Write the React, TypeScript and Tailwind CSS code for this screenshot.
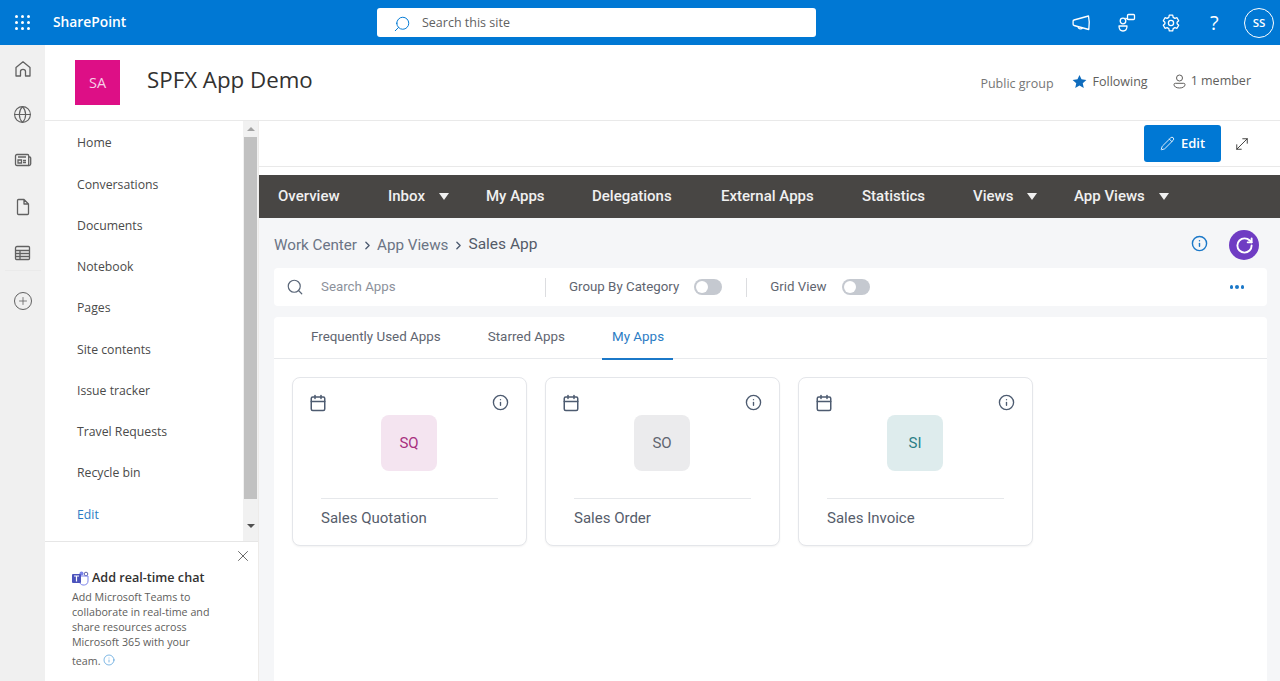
import { Calendar, ChevronRight, Globe, Info, MoveDiagonal, Pencil, Plus, RotateCw, Search, X } from 'lucide-react'

const segoe = "font-['Open_Sans',sans-serif]"

const siteLinks = [
  'Home',
  'Conversations',
  'Documents',
  'Notebook',
  'Pages',
  'Site contents',
  'Issue tracker',
  'Travel Requests',
  'Recycle bin',
]

const menuItems = [
  { label: 'Overview', width: 'w-[110px]' },
  { label: 'Inbox', width: 'w-[98px]', caret: true },
  { label: 'My Apps', width: 'w-[106px]' },
  { label: 'Delegations', width: 'w-[129px]' },
  { label: 'External Apps', width: 'w-[141px]' },
  { label: 'Statistics', width: 'w-[111px]' },
  { label: 'Views', width: 'w-[101px]', caret: true },
  { label: 'App Views', width: 'w-[110px]', caret: true },
]

const apps = [
  { name: 'Sales Quotation', short: 'SQ', tile: 'bg-[#f4e4f0]', ink: 'text-[#a8307f]' },
  { name: 'Sales Order', short: 'SO', tile: 'bg-[#ebebed]', ink: 'text-[#5f6570]' },
  { name: 'Sales Invoice', short: 'SI', tile: 'bg-[#deeced]', ink: 'text-[#2b7f86]' },
]

function WaffleIcon() {
  return (
    <div className="grid grid-cols-3 gap-[3px]">
      {Array.from({ length: 9 }).map((_, i) => (
        <span key={i} className="h-[3px] w-[3px] rounded-full bg-white" />
      ))}
    </div>
  )
}

function Megaphone() {
  return (
    <svg width="20" height="20" viewBox="0 0 20 20" fill="none" stroke="white" strokeWidth="1.3">
      <path d="M2 7 16.500 3c.6 2.500.9 9.500.3 13.500L2 12.500c-.6-.2-.9-.6-.9-1.200V8.100c0-.5.4-1 .9-1.100Z" strokeLinejoin="round" />
      <path d="M6 13.700c.2 2.400 3.400 3 4.600 1" />
    </svg>
  )
}

function PeopleChat() {
  return (
    <svg width="18" height="20" viewBox="0 0 18 20" fill="none" stroke="white" strokeWidth="1.3">
      <rect x="9.500" y="1.500" width="7" height="5" rx="1" />
      <circle cx="5" cy="8" r="2.800" />
      <path d="M1 13h8c0 3.500-1.500 5-4 5s-4-1.500-4-5Z" strokeLinejoin="round" />
      <path d="M10 6.500 7.500 5" />
    </svg>
  )
}

function Gear() {
  return (
    <svg width="18" height="18" viewBox="0 0 18 18" fill="none" stroke="white" strokeWidth="1.3">
      <circle cx="9" cy="9" r="2.600" />
      <path
        d="M7.300 1.200h3.400l.5 2.200 1.700 1 2.100-.7 1.700 3-1.600 1.500v1.600l1.600 1.500-1.700 3-2.100-.7-1.700 1-.5 2.200H7.300l-.5-2.200-1.700-1-2.100.7-1.700-3 1.600-1.500V8.200L1.300 6.700l1.700-3 2.100.7 1.700-1Z"
        strokeLinejoin="round"
      />
    </svg>
  )
}

function RailIcons() {
  const cls = 'text-[#616161]'
  return (
    <div className="flex w-[45px] shrink-0 flex-col items-center bg-[#f0f0f0] pt-[15px]">
      <svg className={cls} width="18" height="18" viewBox="0 0 18 18" fill="none" stroke="currentColor" strokeWidth="1.3">
        <path d="M2 7.500 9 1.800l7 5.700V16h-4.500v-4.500c0-1.200-1-2.200-2.500-2.200s-2.500 1-2.500 2.200V16H2Z" strokeLinejoin="round" />
      </svg>
      <Globe className={`${cls} mt-[27px]`} size={19} strokeWidth={1.4} />
      <svg className={`${cls} mt-[28px]`} width="18" height="16" viewBox="0 0 18 16" fill="none" stroke="currentColor" strokeWidth="1.3">
        <path d="M1.500 4c0-1 .6-1.500 1.500-1.500h10.500c.7 0 1.200.5 1.200 1.200V13.500H3c-1 0-1.500-.6-1.500-1.500Z" />
        <path d="M14.700 5h1c.6 0 1 .4 1 1v6c0 1-.7 1.500-2 1.500" />
        <path d="M4 5h8M4 8h3.500v3H4ZM9 8.500h3M9 10.500h3" />
      </svg>
      <svg className={`${cls} mt-[30px]`} width="14" height="18" viewBox="0 0 14 18" fill="none" stroke="currentColor" strokeWidth="1.3">
        <path d="M1.500 2.500c0-.6.400-1 1-1H8l4.500 4.500v9.500c0 .6-.4 1-1 1h-9c-.6 0-1-.4-1-1ZM8 1.500V6h4.500" strokeLinejoin="round" />
      </svg>
      <svg className={`${cls} mt-[29px]`} width="17" height="16" viewBox="0 0 17 16" fill="none" stroke="currentColor" strokeWidth="1.3">
        <path d="M3 1.500h11.500c.6 0 1 .4 1 1v11c0 .6-.4 1-1 1H2.500c-.6 0-1-.4-1-1V3C1.500 2.200 2.200 1.500 3 1.500Z" />
        <path d="M1.500 5.500h14M1.500 8.500h14M1.500 11.500h14M6 5.500v9" />
      </svg>
      <div className="mt-[9px] h-px w-[36px] bg-[#eaeaea]" />
      <div className="mt-[21px] flex h-[18px] w-[18px] items-center justify-center rounded-full border-[1.5px] border-[#616161]">
        <Plus size={12} strokeWidth={1.6} className={cls} />
      </div>
    </div>
  )
}

function SiteNav() {
  return (
    <div className={`flex w-[214px] shrink-0 flex-col border-r border-[#edebe9] ${segoe}`}>
      <div className="flex h-[421px] shrink-0 border-b border-[#e6e6e6]">
        <div className="w-[198px] pl-[32px] pt-[2px] text-[12.250px] text-[#4a4a4a]">
          {siteLinks.map((link) => (
            <div key={link} className="flex h-[41.250px] items-center">
              {link}
            </div>
          ))}
          <div className="flex h-[41.250px] items-center text-[#2b7cc4]">Edit</div>
        </div>
        <div className="flex w-[15px] flex-col items-center bg-[#f1f1f1]">
          <div className="mt-[6px] h-0 w-0 border-x-[4px] border-b-[4px] border-x-transparent border-b-[#a3a3a3]" />
          <div className="mt-[6px] h-[362px] w-[13px] bg-[#c1c1c1]" />
          <div className="mt-[25px] h-0 w-0 border-x-[4px] border-t-[4px] border-x-transparent border-t-[#505050]" />
        </div>
      </div>
      <div className="relative pl-[27px] pt-[27px]">
        <X className="absolute right-[6px] top-[5px] text-[#4a4a4a]" size={18} strokeWidth={1.1} />
        <div className="flex items-center gap-[3px]">
          <svg width="17" height="15" viewBox="0 0 17 15">
            <circle cx="14" cy="3" r="1.800" fill="none" stroke="#6264a7" strokeWidth="1" />
            <circle cx="9.500" cy="2.500" r="2" fill="#7b83eb" />
            <path d="M7 5h9v5c0 5-7 5-8 2Z" fill="none" stroke="#7b83eb" strokeWidth="1" />
            <rect x="0" y="3" width="9" height="9" rx="1" fill="#4b53bc" />
            <path d="M2 5h5M4.500 5v5.500" stroke="white" strokeWidth="1.200" />
          </svg>
          <span className="text-[12.600px] font-semibold text-[#323130]">Add real-time chat</span>
        </div>
        <p className="mt-[2px] w-[150px] text-[10.700px] leading-[15px] text-[#605e5c]">
          Add Microsoft Teams to collaborate in real-time and share resources across Microsoft 365 with your
        </p>
        <div className="mt-[4px] flex items-center gap-[3px] text-[10.700px] leading-[15px] text-[#605e5c]">
          team.
          <Info size={12} strokeWidth={1.3} className="mb-[3px] text-[#3b92d6]" />
        </div>
      </div>
    </div>
  )
}

function Toggle() {
  return (
    <div className="flex h-[16px] w-[28px] items-center rounded-full bg-[#c5c9d0] px-[2px]">
      <span className="h-[12px] w-[12px] rounded-full bg-white" />
    </div>
  )
}

function AppCard({ name, short, tile, ink }: { name: string; short: string; tile: string; ink: string }) {
  return (
    <div className="h-[169px] w-[235px] rounded-[8px] border border-[#e4e6ea] bg-white px-[28px] shadow-[0_1px_2px_rgba(0,0,0,0.05)]">
      <div className="relative flex h-[121px] justify-center border-b border-[#e6e8eb] pt-[37px]">
        <Calendar className="absolute left-[-12px] top-[16px] text-[#4d5b70]" size={18} strokeWidth={2} />
        <Info className="absolute right-[-11px] top-[16px] text-[#4d5b70]" size={17} strokeWidth={1.9} />
        <div className={`mr-[1px] flex h-[56px] w-[56px] items-center justify-center rounded-[8px] text-[15px] ${tile} ${ink}`}>
          {short}
        </div>
      </div>
      <div className="pt-[8px] text-[15px] text-[#565d6b]">{name}</div>
    </div>
  )
}

function WorkCenter() {
  return (
    <div className="flex min-h-0 flex-1 flex-col overflow-hidden font-['Roboto',sans-serif]">
      <div className="mt-[8px] flex h-[43px] shrink-0 items-center bg-[#484644] pl-[19px] text-[15px] font-medium text-[#f0f0f0]">
        {menuItems.map((item) => (
          <div key={item.label} className={`flex items-center ${item.width}`}>
            <span>{item.label}</span>
            {item.caret && (
              <span className="ml-[14px] h-0 w-0 border-x-[5px] border-t-[7px] border-x-transparent border-t-[#f0f0f0]" />
            )}
          </div>
        ))}
      </div>
      <div className="flex min-h-0 flex-1 flex-col bg-[#f5f6f8] px-[13px] pl-[15px]">
        <div className="flex h-[50px] shrink-0 items-center pr-[8px] pt-[4px] text-[15.200px] text-[#6b7485]">
          <span>Work Center</span>
          <ChevronRight size={13} strokeWidth={2.5} className="mx-[3.500px] text-[#4d5b70]" />
          <span>App Views</span>
          <ChevronRight size={13} strokeWidth={2.5} className="mx-[3.500px] text-[#4d5b70]" />
          <span className="text-[15.500px] text-[#545b68]">Sales App</span>
          <Info size={17} strokeWidth={2} className="-mt-[4px] ml-auto mr-[21px] text-[#1b78c8]" />
          <div className="flex h-[30px] w-[30px] items-center justify-center rounded-full bg-[#6f3cc3]">
            <RotateCw size={19} strokeWidth={2.4} className="text-white" />
          </div>
        </div>
        <div className="flex h-[38px] shrink-0 items-center rounded-[4px] bg-white pl-[12px] pr-[23px] text-[13.300px] text-[#5f6570]">
          <Search size={18} strokeWidth={1.6} className="text-[#5a6678]" />
          <span className="ml-[17px] w-[224px] text-[#8c919b]">Search Apps</span>
          <span className="h-[19px] w-px bg-[#dcdde0]" />
          <span className="ml-[23px]">Group By Category</span>
          <span className="ml-[15px]">
            <Toggle />
          </span>
          <span className="ml-[24px] h-[19px] w-px bg-[#dcdde0]" />
          <span className="ml-[23px]">Grid View</span>
          <span className="ml-[15px]">
            <Toggle />
          </span>
          <span className="ml-auto flex gap-[2px]">
            <i className="h-[3.500px] w-[3.500px] rounded-full bg-[#1b78c8]" />
            <i className="h-[3.500px] w-[3.500px] rounded-full bg-[#1b78c8]" />
            <i className="h-[3.500px] w-[3.500px] rounded-full bg-[#1b78c8]" />
          </span>
        </div>
        <div className="mt-[11px] flex-1 rounded-t-[4px] bg-white">
          <div className="flex h-[42px] items-center border-b border-[#e8eaed] pl-[37px] text-[13.400px] text-[#5f6570]">
            <span>Frequently Used Apps</span>
            <span className="ml-[47px]">Starred Apps</span>
            <span className="relative ml-[47px] text-[#2b7cc4]">
              My Apps
              <i className="absolute bottom-[-12px] left-[-10px] right-[-9px] h-[2px] bg-[#1b78c8]" />
            </span>
          </div>
          <div className="flex gap-[18px] pl-[18px] pt-[18px]">
            {apps.map((app) => (
              <AppCard key={app.name} {...app} />
            ))}
          </div>
        </div>
      </div>
    </div>
  )
}

export default function App() {
  return (
    <div className={`flex h-[681px] w-[1280px] flex-col overflow-hidden bg-white ${segoe}`}>
      {/* Suite bar */}
      <header className="flex h-[45px] shrink-0 items-center bg-[#0078d4] text-white">
        <div className="flex w-[45px] justify-center">
          <WaffleIcon />
        </div>
        <span className="ml-[8px] w-[324px] text-[13.800px] font-semibold">SharePoint</span>
        <div className="flex h-[29px] w-[439px] items-center rounded-[3px] bg-white pl-[16px] pt-[2px] text-[12.500px] text-[#616161]">
          <Search size={18} strokeWidth={1.3} className="scale-x-[-1] text-[#0078d4]" />
          <span className="ml-[11px]">Search this site</span>
        </div>
        <div className="ml-auto flex items-center pr-[6px]">
          <Megaphone />
          <span className="ml-[26px] flex">
            <PeopleChat />
          </span>
          <span className="ml-[26px] flex">
            <Gear />
          </span>
          <span className="ml-[30px] w-[11px] text-[20px] leading-none">?</span>
          <span className="ml-[23px] flex h-[30px] w-[30px] items-center justify-center rounded-full border border-white text-[11.500px] font-semibold">
            SS
          </span>
        </div>
      </header>
      <div className="flex min-h-0 flex-1">
        <RailIcons />
        <div className="flex min-w-0 flex-1 flex-col">
          {/* Site header */}
          <div className="flex h-[76px] shrink-0 border-b border-[#e9e9e9] pl-[30px] pt-[15px]">
            <div className="flex h-[45px] w-[45px] items-center justify-center bg-[#dd0f86] text-[14.500px] text-[#f7cfe6]">
              SA
            </div>
            <span className="ml-[27px] mt-[5px] text-[22.300px] font-medium leading-[29px] text-[#323130]">SPFX App Demo</span>
            <div className="ml-auto mr-[29px] mt-[14px] flex items-center self-start text-[12.500px] text-[#605e5c]">
              <span className="mt-[1px] text-[#767676]">Public group</span>
              <svg className="-mt-[4px] ml-[18px] text-[#0f6cbd]" width="15" height="15" viewBox="0 0 24 24" fill="currentColor">
                <path d="m12 1.500 3.200 7 7.800.9-5.800 5.200 1.600 7.700L12 18.400l-6.800 3.900 1.600-7.700L1 9.400l7.800-.9Z" />
              </svg>
              <span className="-mt-[3px] ml-[6px]">Following</span>
              <svg className="-mt-[5px] ml-[25px] text-[#605e5c]" width="13" height="15" viewBox="0 0 13 15" fill="none" stroke="currentColor" strokeWidth="1">
                <circle cx="6.500" cy="4" r="3" />
                <path d="M1 10.500c0-.8.600-1.200 1.300-1.200h8.400c.7 0 1.300.4 1.300 1.200 0 2-2 3.500-5.500 3.500S1 12.500 1 10.500Z" />
              </svg>
              <span className="-mt-[5px] ml-[5px]">1 member</span>
            </div>
          </div>
          <div className="flex min-h-0 flex-1">
            <SiteNav />
            <div className="flex min-w-0 flex-1 flex-col">
              <div className="flex h-[46px] shrink-0 items-center justify-end border-b border-[#e9e9e9] pr-[29px]">
                <div className="flex h-[37px] w-[77px] items-center justify-center gap-[6px] rounded-[3px] bg-[#0078d4] text-[13px] font-semibold text-white">
                  <Pencil size={15} strokeWidth={1.4} />
                  Edit
                </div>
                <MoveDiagonal className="ml-[12px] text-[#323130]" size={18} strokeWidth={1.2} />
              </div>
              <WorkCenter />
            </div>
          </div>
        </div>
      </div>
    </div>
  )
}
